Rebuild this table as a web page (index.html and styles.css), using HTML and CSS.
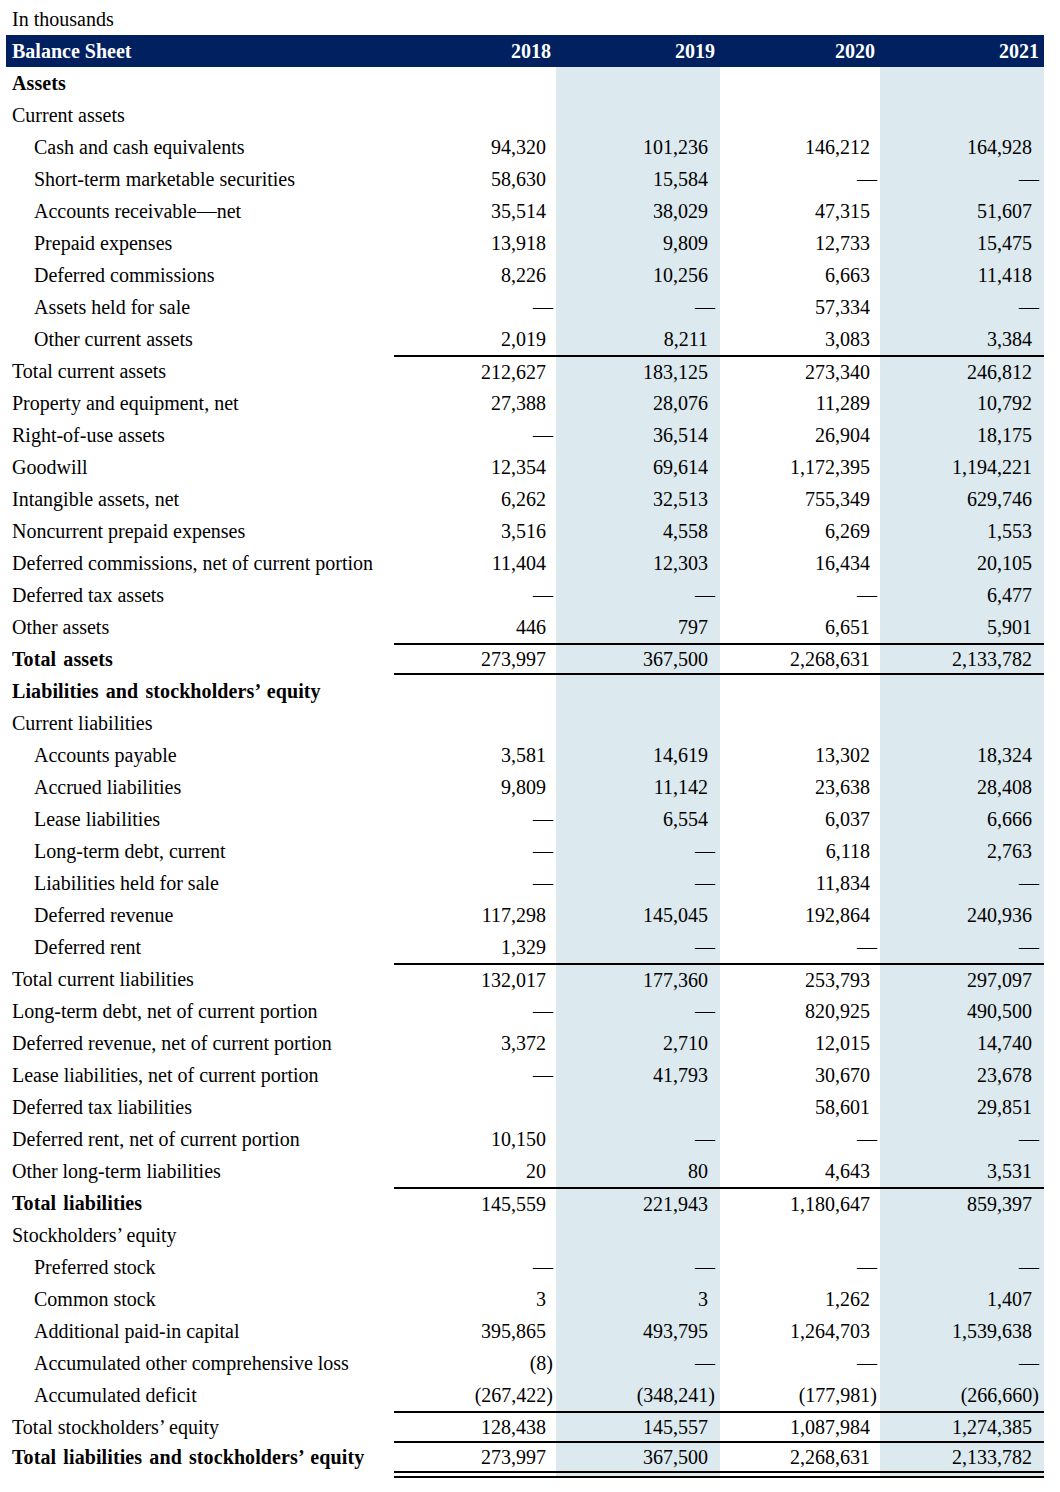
FILE: index.html
```html
<!DOCTYPE html>
<html lang="en">
<head>
<meta charset="utf-8">
<title>Balance Sheet</title>
<link rel="stylesheet" href="styles.css">
</head>
<body>
<div class="page">
  <div class="caption">In thousands</div>
  <div class="sheet">
    <div class="row head"><div class="lbl">Balance Sheet</div><div class="num">2018</div><div class="num">2019</div><div class="num">2020</div><div class="num">2021</div></div>

    <div class="row"><div class="lbl b">Assets</div><div></div><div class="sh"></div><div></div><div class="sh"></div></div>
    <div class="row"><div class="lbl">Current assets</div><div></div><div class="sh"></div><div></div><div class="sh"></div></div>
    <div class="row"><div class="lbl in">Cash and cash equivalents</div><div class="num">94,320</div><div class="num sh">101,236</div><div class="num">146,212</div><div class="num sh">164,928</div></div>
    <div class="row"><div class="lbl in">Short-term marketable securities</div><div class="num">58,630</div><div class="num sh">15,584</div><div class="num z">—</div><div class="num sh z">—</div></div>
    <div class="row"><div class="lbl in">Accounts receivable—net</div><div class="num">35,514</div><div class="num sh">38,029</div><div class="num">47,315</div><div class="num sh">51,607</div></div>
    <div class="row"><div class="lbl in">Prepaid expenses</div><div class="num">13,918</div><div class="num sh">9,809</div><div class="num">12,733</div><div class="num sh">15,475</div></div>
    <div class="row"><div class="lbl in">Deferred commissions</div><div class="num">8,226</div><div class="num sh">10,256</div><div class="num">6,663</div><div class="num sh">11,418</div></div>
    <div class="row"><div class="lbl in">Assets held for sale</div><div class="num z">—</div><div class="num sh z">—</div><div class="num">57,334</div><div class="num sh z">—</div></div>
    <div class="row"><div class="lbl in">Other current assets</div><div class="num">2,019</div><div class="num sh">8,211</div><div class="num">3,083</div><div class="num sh">3,384</div></div>
    <div class="row top"><div class="lbl">Total current assets</div><div class="num">212,627</div><div class="num sh">183,125</div><div class="num">273,340</div><div class="num sh">246,812</div></div>
    <div class="row"><div class="lbl">Property and equipment, net</div><div class="num">27,388</div><div class="num sh">28,076</div><div class="num">11,289</div><div class="num sh">10,792</div></div>
    <div class="row"><div class="lbl">Right-of-use assets</div><div class="num z">—</div><div class="num sh">36,514</div><div class="num">26,904</div><div class="num sh">18,175</div></div>
    <div class="row"><div class="lbl">Goodwill</div><div class="num">12,354</div><div class="num sh">69,614</div><div class="num">1,172,395</div><div class="num sh">1,194,221</div></div>
    <div class="row"><div class="lbl">Intangible assets, net</div><div class="num">6,262</div><div class="num sh">32,513</div><div class="num">755,349</div><div class="num sh">629,746</div></div>
    <div class="row"><div class="lbl">Noncurrent prepaid expenses</div><div class="num">3,516</div><div class="num sh">4,558</div><div class="num">6,269</div><div class="num sh">1,553</div></div>
    <div class="row"><div class="lbl">Deferred commissions, net of current portion</div><div class="num">11,404</div><div class="num sh">12,303</div><div class="num">16,434</div><div class="num sh">20,105</div></div>
    <div class="row"><div class="lbl">Deferred tax assets</div><div class="num z">—</div><div class="num sh z">—</div><div class="num z">—</div><div class="num sh">6,477</div></div>
    <div class="row"><div class="lbl">Other assets</div><div class="num">446</div><div class="num sh">797</div><div class="num">6,651</div><div class="num sh">5,901</div></div>
    <div class="row top bottom"><div class="lbl b">Total assets</div><div class="num">273,997</div><div class="num sh">367,500</div><div class="num">2,268,631</div><div class="num sh">2,133,782</div></div>

    <div class="row"><div class="lbl b">Liabilities and stockholders’ equity</div><div></div><div class="sh"></div><div></div><div class="sh"></div></div>
    <div class="row"><div class="lbl">Current liabilities</div><div></div><div class="sh"></div><div></div><div class="sh"></div></div>
    <div class="row"><div class="lbl in">Accounts payable</div><div class="num">3,581</div><div class="num sh">14,619</div><div class="num">13,302</div><div class="num sh">18,324</div></div>
    <div class="row"><div class="lbl in">Accrued liabilities</div><div class="num">9,809</div><div class="num sh">11,142</div><div class="num">23,638</div><div class="num sh">28,408</div></div>
    <div class="row"><div class="lbl in">Lease liabilities</div><div class="num z">—</div><div class="num sh">6,554</div><div class="num">6,037</div><div class="num sh">6,666</div></div>
    <div class="row"><div class="lbl in">Long-term debt, current</div><div class="num z">—</div><div class="num sh z">—</div><div class="num">6,118</div><div class="num sh">2,763</div></div>
    <div class="row"><div class="lbl in">Liabilities held for sale</div><div class="num z">—</div><div class="num sh z">—</div><div class="num">11,834</div><div class="num sh z">—</div></div>
    <div class="row"><div class="lbl in">Deferred revenue</div><div class="num">117,298</div><div class="num sh">145,045</div><div class="num">192,864</div><div class="num sh">240,936</div></div>
    <div class="row"><div class="lbl in">Deferred rent</div><div class="num">1,329</div><div class="num sh z">—</div><div class="num z">—</div><div class="num sh z">—</div></div>
    <div class="row top"><div class="lbl">Total current liabilities</div><div class="num">132,017</div><div class="num sh">177,360</div><div class="num">253,793</div><div class="num sh">297,097</div></div>
    <div class="row"><div class="lbl">Long-term debt, net of current portion</div><div class="num z">—</div><div class="num sh z">—</div><div class="num">820,925</div><div class="num sh">490,500</div></div>
    <div class="row"><div class="lbl">Deferred revenue, net of current portion</div><div class="num">3,372</div><div class="num sh">2,710</div><div class="num">12,015</div><div class="num sh">14,740</div></div>
    <div class="row"><div class="lbl">Lease liabilities, net of current portion</div><div class="num z">—</div><div class="num sh">41,793</div><div class="num">30,670</div><div class="num sh">23,678</div></div>
    <div class="row"><div class="lbl">Deferred tax liabilities</div><div class="num"></div><div class="num sh"></div><div class="num">58,601</div><div class="num sh">29,851</div></div>
    <div class="row"><div class="lbl">Deferred rent, net of current portion</div><div class="num">10,150</div><div class="num sh z">—</div><div class="num z">—</div><div class="num sh z">—</div></div>
    <div class="row"><div class="lbl">Other long-term liabilities</div><div class="num">20</div><div class="num sh">80</div><div class="num">4,643</div><div class="num sh">3,531</div></div>
    <div class="row top"><div class="lbl b">Total liabilities</div><div class="num">145,559</div><div class="num sh">221,943</div><div class="num">1,180,647</div><div class="num sh">859,397</div></div>
    <div class="row"><div class="lbl">Stockholders’ equity</div><div></div><div class="sh"></div><div></div><div class="sh"></div></div>
    <div class="row"><div class="lbl in">Preferred stock</div><div class="num z">—</div><div class="num sh z">—</div><div class="num z">—</div><div class="num sh z">—</div></div>
    <div class="row"><div class="lbl in">Common stock</div><div class="num">3</div><div class="num sh">3</div><div class="num">1,262</div><div class="num sh">1,407</div></div>
    <div class="row"><div class="lbl in">Additional paid-in capital</div><div class="num">395,865</div><div class="num sh">493,795</div><div class="num">1,264,703</div><div class="num sh">1,539,638</div></div>
    <div class="row"><div class="lbl in">Accumulated other comprehensive loss</div><div class="num z">(8)</div><div class="num sh z">—</div><div class="num z">—</div><div class="num sh z">—</div></div>
    <div class="row"><div class="lbl in">Accumulated deficit</div><div class="num z">(267,422)</div><div class="num sh z">(348,241)</div><div class="num z">(177,981)</div><div class="num sh z">(266,660)</div></div>
    <div class="row top bottom"><div class="lbl">Total stockholders’ equity</div><div class="num">128,438</div><div class="num sh">145,557</div><div class="num">1,087,984</div><div class="num sh">1,274,385</div></div>
    <div class="row final"><div class="lbl b">Total liabilities and stockholders’ equity</div><div class="num">273,997</div><div class="num sh">367,500</div><div class="num">2,268,631</div><div class="num sh">2,133,782</div></div>
  </div>
</div>
</body>
</html>
```

FILE: styles.css
```css
html, body {
  margin: 0;
  padding: 0;
  background: #ffffff;
}

.page {
  padding: 3px 0 0 6px;
  font-family: "Liberation Serif", "Times New Roman", serif;
  font-size: 20px;
  color: #000000;
}

.caption {
  height: 32px;
  line-height: 32px;
  padding-left: 6px;
}

.sheet {
  width: 1038px;
}

.row {
  display: grid;
  grid-template-columns: 388px 162px 164px 160px 164px;
  height: 32px;
}

.row > div {
  box-sizing: border-box;
  display: flex;
  align-items: center;
  white-space: nowrap;
}

.lbl {
  padding-left: 6px;
}

.lbl.in {
  padding-left: 28px;
}

.lbl.b {
  font-weight: bold;
  word-spacing: 2px;
  letter-spacing: 0.1px;
}

.num {
  justify-content: flex-end;
  padding-right: 11px;
}

.row > .num:nth-child(2),
.row > .num:nth-child(4) {
  padding-right: 10px;
}

.row > .num:nth-child(3),
.row > .num:nth-child(5) {
  padding-right: 12px;
}

.row > .num.z:nth-child(2),
.row > .num.z:nth-child(4) {
  padding-right: 3px;
}

.row > .num.z:nth-child(3),
.row > .num.z:nth-child(5) {
  padding-right: 5px;
}

.sh {
  background: #dce9ee;
}

.head {
  background: #002060;
  color: #ffffff;
  font-weight: bold;
}

.row.head > .num {
  padding-right: 5px;
}

.row.top > div:not(.lbl) {
  border-top: 2px solid #000000;
}

.row.bottom > div:not(.lbl) {
  border-bottom: 2px solid #000000;
}

.row.final {
  height: 35px;
}

.row.final > .lbl {
  padding-bottom: 7px;
}

.row.final > div:not(.lbl) {
  border-bottom: 7px double #000000;
}
```
